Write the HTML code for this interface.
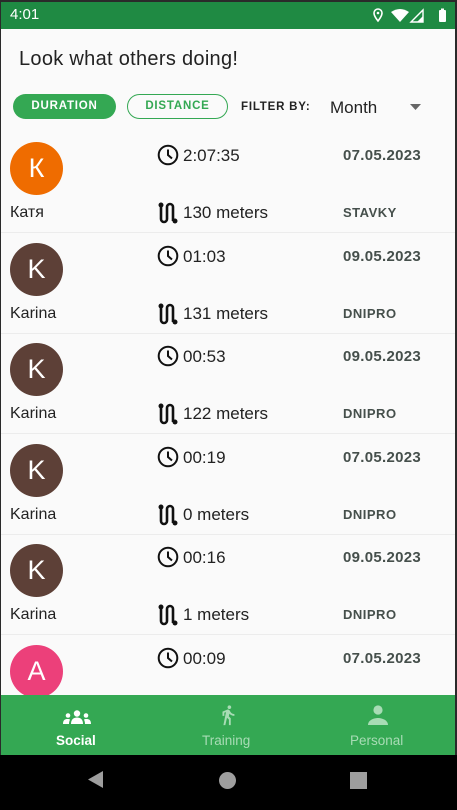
<!DOCTYPE html>
<html><head><meta charset="utf-8"><style>
*{margin:0;padding:0;box-sizing:border-box}
body{width:457px;height:810px;overflow:hidden;background:#2a2a2a;font-family:"Liberation Sans",sans-serif;position:relative}
.abs{position:absolute}
#app{position:absolute;left:1px;top:2px;width:454px;height:753px;background:#fafafa;overflow:hidden}
.status{position:absolute;left:0;top:0;width:454px;height:27px;background:#1f8a43;color:#fff;font-size:15px}
.row{position:absolute;left:0;width:454px;height:100px;border-bottom:1px solid #ececec}
.av{position:absolute;left:9px;top:9px;width:53px;height:53px;border-radius:50%;color:#fff;font-size:27px;text-align:center;line-height:53px}
.name{position:absolute;left:9px;top:71px;font-size:16px;color:#222}
.t{position:absolute;left:182px;top:13px;font-size:17px;color:#222}
.d{position:absolute;left:182px;top:70px;font-size:17px;color:#222}
.date{position:absolute;left:342px;top:14px;font-size:15px;font-weight:bold;color:#454f4b;letter-spacing:.3px}
.city{position:absolute;left:342px;top:72px;font-size:13px;font-weight:bold;color:#454f4b;letter-spacing:.5px}
.ic1{position:absolute;left:156px;top:11px}
.ic2{position:absolute;left:157px;top:69px}
</style></head><body>
<div id="app">
<div class="status"><span class="abs" style="left:9px;top:4px">4:01</span>
<svg class="abs" style="left:372px;top:6px" width="80" height="16" viewBox="0 0 80 16">
<path d="M5 1a4 4 0 0 1 4 4c0 3-4 8-4 8s-4-5-4-8a4 4 0 0 1 4-4z" fill="none" stroke="#fff" stroke-width="1.6"/><circle cx="5" cy="5" r="1.3" fill="#fff"/>
<path d="M27 14 L18 4 Q27 -2 36 4 Z" fill="#fff"/>
<path d="M38 14 L50 2 L50 14 Z" fill="none" stroke="#fff" stroke-width="1.4"/><path d="M44 14 L50 8 L50 14Z" fill="#fff"/>
<rect x="66" y="2" width="7" height="12" rx="1" fill="#fff"/><rect x="68" y="0.5" width="3" height="2" fill="#fff"/>
</svg></div>
<div class="abs" style="left:18px;top:46px;font-size:20px;color:#222;letter-spacing:.3px">Look what others doing!</div>
<div class="abs" style="left:12px;top:92px;width:103px;height:25px;border-radius:13px;background:#34a853;color:#fff;font-size:11.5px;font-weight:bold;text-align:center;line-height:25px;letter-spacing:.8px">DURATION</div>
<div class="abs" style="left:126px;top:92px;width:101px;height:25px;border-radius:13px;border:1.5px solid #34a853;color:#34a853;font-size:11.5px;font-weight:bold;text-align:center;line-height:22px;letter-spacing:.8px">DISTANCE</div>
<div class="abs" style="left:240px;top:99px;font-size:11.5px;font-weight:bold;color:#222;letter-spacing:.8px">FILTER BY:</div>
<div class="abs" style="left:329px;top:96px;font-size:17px;color:#222">Month</div>
<svg class="abs" style="left:409px;top:102px" width="12" height="6"><path d="M0 0h11L5.5 6z" fill="#666"/></svg>

<div id="rows"></div>

<div class="abs" style="left:0;top:693px;width:454px;height:60px;background:#34a853">
<svg class="abs" style="left:62px;top:15px" width="28" height="14" viewBox="0 0 28 14"><circle cx="14" cy="3.5" r="3.2" fill="#fff"/><circle cx="5" cy="5.5" r="2.3" fill="#fff"/><circle cx="23" cy="5.5" r="2.3" fill="#fff"/><path d="M8 14c0-5 3-6.5 6-6.5s6 1.5 6 6.5z" fill="#fff"/><path d="M0 14c0-4 2-5 4.5-5 1.5 0 2.2.3 2.5.6C6.3 11 6 12.5 6 14z" fill="#fff"/><path d="M28 14c0-4-2-5-4.5-5-1.5 0-2.2.3-2.5.6.7 1.4 1 2.9 1 4.4z" fill="#fff"/></svg>
<div class="abs" style="left:55px;top:38px;font-size:13.5px;font-weight:bold;color:#fff">Social</div>
<svg class="abs" style="left:216px;top:9px" width="22" height="22" viewBox="0 0 24 24"><path fill="#a8dcb5" d="M13.5 5.5c1.1 0 2-.9 2-2s-.9-2-2-2-2 .9-2 2 .9 2 2 2zM9.8 8.9L7 23h2.1l1.8-8 2.1 2v6h2v-7.5l-2.1-2 .6-3C14.8 12 16.8 13 19 13v-2c-1.9 0-3.5-1-4.3-2.4l-1-1.6c-.4-.6-1-1-1.700-1-.3 0-.5.1-.8.1L6 8.3V13h2V9.6l1.8-.7"/></svg>
<div class="abs" style="left:201px;top:38px;font-size:13.5px;color:#a8dcb5">Training</div>
<svg class="abs" style="left:366px;top:10px" width="22" height="20" viewBox="0 0 22 20"><circle cx="11" cy="5" r="4.6" fill="#a8dcb5"/><path d="M1 20c0-5 6-7 10-7s10 2 10 7z" fill="#a8dcb5"/></svg>
<div class="abs" style="left:349px;top:38px;font-size:13.5px;color:#a8dcb5">Personal</div>
</div>
</div>
<div class="abs" style="left:0;top:755px;width:457px;height:55px;background:#000">
<svg class="abs" style="left:86px;top:15px" width="20" height="20"><path d="M17 1v17L2 9.5z" fill="#9e9e9e"/></svg>
<div class="abs" style="left:219px;top:17px;width:17px;height:17px;border-radius:50%;background:#9e9e9e"></div>
<div class="abs" style="left:350px;top:17px;width:17px;height:17px;background:#9e9e9e"></div>
</div>
<script>
var data=[["К","#ef6c00","Катя","2:07:35","130 meters","07.05.2023","STAVKY"],
["K","#5d4037","Karina","01:03","131 meters","09.05.2023","DNIPRO"],
["K","#5d4037","Karina","00:53","122 meters","09.05.2023","DNIPRO"],
["K","#5d4037","Karina","00:19","0 meters","07.05.2023","DNIPRO"],
["K","#5d4037","Karina","00:16","1 meters","09.05.2023","DNIPRO"],
["A","#ec407a","","00:09","","07.05.2023",""]];
var clock='<svg width="22" height="22" viewBox="0 0 22 22"><circle cx="11" cy="11" r="9.3" fill="none" stroke="#111" stroke-width="2"/><path d="M11 5.5V11l4 3.5" fill="none" stroke="#111" stroke-width="2"/></svg>';
var route='<svg width="20" height="22" viewBox="0 0 20 22"><circle cx="3" cy="3" r="2.5" fill="#111"/><circle cx="17" cy="19" r="2.5" fill="#111"/><path d="M3 3v14a3 3 0 0 0 6 0V5a3 3 0 0 1 6 0v14" fill="none" stroke="#111" stroke-width="2.6"/></svg>';
var h="";
data.forEach(function(r,i){var top=131+i*100.6;
h+='<div class="row" style="top:'+top+'px"><div class="av" style="background:'+r[1]+'">'+r[0]+'</div>'+
(r[2]?'<div class="name">'+r[2]+'</div>':'')+'<div class="ic1">'+clock+'</div><div class="t">'+r[3]+'</div>'+
(r[4]?'<div class="ic2">'+route+'</div><div class="d">'+r[4]+'</div>':'')+'<div class="date">'+r[5]+'</div>'+(r[6]?'<div class="city">'+r[6]+'</div>':'')+'</div>';});
document.getElementById("rows").innerHTML=h;
</script>
</body></html>
